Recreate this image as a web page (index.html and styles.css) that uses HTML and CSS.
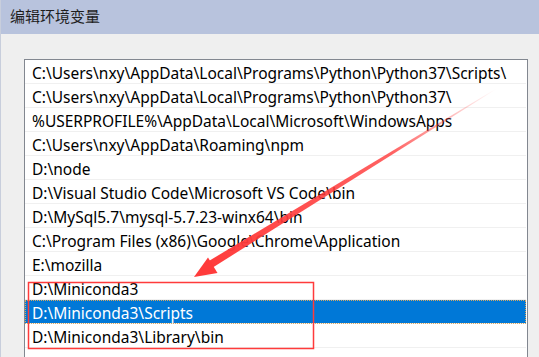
FILE: index.html
```html
<!DOCTYPE html>
<html>
<head>
  <meta charset="utf-8">
  <title>编辑环境变量</title>
<link rel="stylesheet" href="styles.css">
</head>
<body>
  <div class="dialog">
    <div class="title">编辑环境变量</div>
    <div class="panel">
      <ul class="path_list">
        <li>C:\Users\nxy\AppData\Local\Programs\Python\Python37\Scripts\</li>
        <li>C:\Users\nxy\AppData\Local\Programs\Python\Python37\</li>
        <li>%USERPROFILE%\AppData\Local\Microsoft\WindowsApps</li>
        <li>C:\Users\nxy\AppData\Roaming\npm</li>
        <li>D:\node</li>
        <li>D:\Visual Studio Code\Microsoft VS Code\bin</li>
        <li>D:\MySql5.7\mysql-5.7.23-winx64\bin</li>
        <li>C:\Program Files (x86)\Google\Chrome\Application</li>
        <li>E:\mozilla</li>
        <li>D:\Miniconda3</li>
        <li class="selected">D:\Miniconda3\Scripts</li>
        <li>D:\Miniconda3\Library\bin</li>
        <li></li>
      </ul>
    </div>
    <svg class="marks" width="539" height="357" viewBox="0 0 539 357">
      <defs>
        <linearGradient id="fade" x1="495" y1="89" x2="200" y2="272" gradientUnits="userSpaceOnUse">
          <stop offset="0" stop-color="#ff3b3b" stop-opacity="0"></stop>
          <stop offset="0.35" stop-color="#ff3b3b" stop-opacity="0.8"></stop>
          <stop offset="1" stop-color="#ff3b3b"></stop>
        </linearGradient>
      </defs>
      <polygon points="495.3,88.6 494.7,89.4 211,268 207,261.5" fill="url(#fade)"></polygon>
      <polygon points="193,277 207,257.5 216.5,273" fill="#ff3b3b"></polygon>
      <rect x="27.5" y="282.5" width="285" height="66" fill="none" stroke="#ff3b3b" stroke-width="1.5"></rect>
    </svg>
  </div>
</body>
</html>
```

FILE: styles.css
```css
body {
  margin: 0;
  font-family: "Noto Sans", "Noto Sans CJK SC", sans-serif;
  background-color: #efefef;
}
.dialog {
  position: relative;
  width: 539px;
  height: 357px;
  overflow: hidden;
  border-left: 1px solid #c8cedc;
  box-sizing: border-box;
}
.title {
  height: 34px;
  box-sizing: border-box;
  padding: 6px 0 0 9px;
  background-color: #b8c3dd;
  color: #1e1e1e;
  font-family: "Noto Sans CJK SC", sans-serif;
  font-size: 15px;
  line-height: 20px;
}
.panel {
  padding: 25px 11px 0 23px;
}
.path_list {
  margin: 0;
  padding: 0;
  list-style: none;
  background-color: #fff;
  border: 1px solid #828790;
  height: 400px;
}
.path_list > li {
  height: 24px;
  box-sizing: border-box;
  margin-right: 1px;
  padding: 3px 0 0 7px;
  border-bottom: 1px solid #f0f0f0;
  font-size: 15.5px;
  line-height: 20px;
  color: #000;
  white-space: nowrap;
}
.path_list > li.selected {
  background-color: #0078d7;
  color: #fff;
  outline: 1px dotted #d9a860;
  outline-offset: -1px;
}
.marks {
  position: absolute;
  left: 0;
  top: 0;
  pointer-events: none;
}
```
